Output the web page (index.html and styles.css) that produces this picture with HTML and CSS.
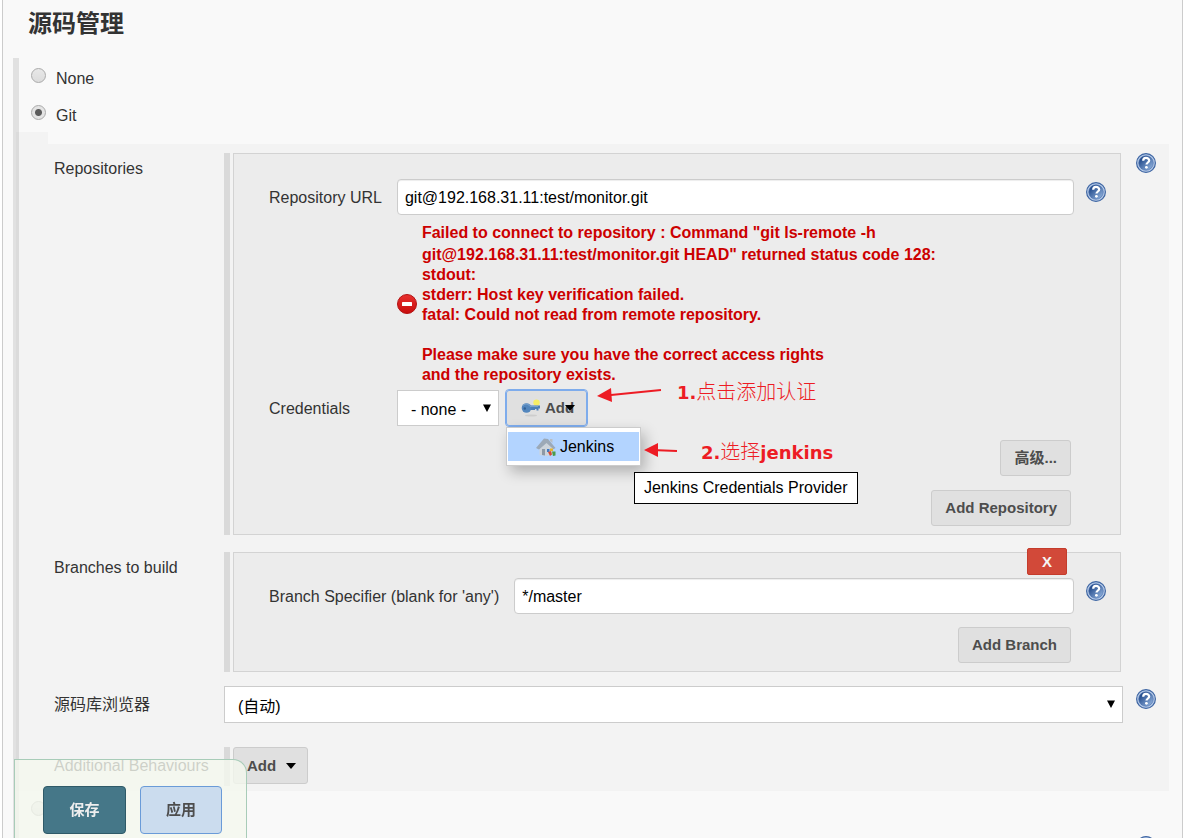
FILE: index.html
```html
<!DOCTYPE html>
<html lang="zh-CN">
<head>
<meta charset="utf-8">
<title>源码管理</title>
<link rel="stylesheet" href="styles.css">
</head>
<body>
<svg class="defs" aria-hidden="true">
  <defs>
    <linearGradient id="helpFill" x1="0" y1="0" x2="1" y2="1">
      <stop offset="0.15" stop-color="#1f4788"/><stop offset="0.9" stop-color="#8fb0dc"/>
    </linearGradient>
    <linearGradient id="errorFill" x1="0" y1="0" x2="0" y2="1">
      <stop offset="0" stop-color="#e8302e"/><stop offset="1" stop-color="#c80d0d"/>
    </linearGradient>
    <symbol id="help" viewBox="0 0 20 20">
      <circle cx="10" cy="10" r="9.4" fill="#b9cde9" stroke="#3f66a3" stroke-width="1.2"/>
      <circle cx="10" cy="10" r="7.3" fill="url(#helpFill)" stroke="#4a6fac" stroke-width=".6"/>
      <path d="M7.200 7.700C7.200 5.700 8.300 4.900 10 4.900s3.200.9 3.200 2.600c0 1.900-2.700 2.100-2.700 4.100" fill="none" stroke="#fff" stroke-width="2.200"/>
      <circle cx="10.400" cy="14.300" r="1.400" fill="#fff"/>
    </symbol>
    <symbol id="caret" viewBox="0 0 10 10"><path d="M1 1.5h8L5 9z" fill="#000"/></symbol>
  </defs>
</svg>
<main class="page">
  <h1 class="title">源码管理</h1>
  <section class="section">
    <label class="choice"><input type="radio" name="scm"><span>None</span></label>
    <label class="choice"><input type="radio" name="scm" checked><span>Git</span></label>
    <div class="git">
      <div class="git-tab"></div>
      <div class="git-body">
        <div class="row repositories">
          <div class="row-label">Repositories</div>
          <div class="chunk">
            <div class="card">
              <div class="fields">
                <label for="url">Repository URL</label>
                <input class="text" id="url" type="text" value="git@192.168.31.11:test/monitor.git">
                <button class="help" type="button" aria-label="Help"><svg><use href="#help"/></svg></button>
                <div class="error">
                  <svg class="error-icon" viewBox="0 0 20 20"><circle cx="10" cy="10" r="9.5" fill="url(#errorFill)" stroke="#b31313"/><rect x="5" y="8" width="10" height="4" rx=".6" fill="#fff"/></svg>
                  <div class="error-text">
                    <p class="error-head">Failed to connect to repository : Command "git ls-remote -h</p>
                    <p>git@192.168.31.11:test/monitor.git HEAD" returned status code 128:<br>stdout:<br>stderr: Host key verification failed.<br>fatal: Could not read from remote repository.<br><br>Please make sure you have the correct access rights<br>and the repository exists.</p>
                  </div>
                </div>
                <label class="cred-label" for="cred">Credentials</label>
                <div class="credentials">
                  <div class="select cred-select">
                    <select id="cred"><option>- none -</option></select>
                    <svg class="arrow"><use href="#caret"/></svg>
                  </div>
                  <div class="add-cred">
                    <button class="btn key-btn" type="button">
                      <svg class="key" viewBox="0 0 20 18">
                        <ellipse cx="10" cy="16.500" rx="6" ry="1" fill="#cdcdcd"/>
                        <circle cx="15.500" cy="3.600" r="3.200" fill="#f7ee65"/>
                        <path d="M8 6.500h11v3h-1.500v2h-2v-1.500h-1.500v1H8z" fill="#4d7fb5"/>
                        <ellipse cx="5.500" cy="9" rx="4.800" ry="4.800" fill="#5386bd"/>
                        <path d="M2 6.500c2-2 5-2 7 .8h8" fill="none" stroke="#82a9d2"/>
                        <circle cx="3.800" cy="9.500" r="1.200" fill="#315f93"/>
                      </svg>
                      <span>Add</span>
                      <svg class="key-arrow" viewBox="0 0 10 6"><path d="M0 0h10L5 6z"/></svg>
                    </button>
                    <div class="menu" role="menu">
                      <button class="menu-item" type="button" role="menuitem">
                        <svg class="house" viewBox="0 0 20 20">
                          <path d="M3.500 10v8l7 1 6.500-1.500V9L10 3z" fill="#cdd4db"/>
                          <path d="M0 11 8 1.500l4 .5 7.500 9-2 1.200L10.500 6 3 12.500z" fill="#9ca9b7"/>
                          <path d="M14 2h2.500v4L14 4z" fill="#b9bfc5"/>
                          <path d="M6 12h3v6.500l-3-.5z" fill="#8d99a6"/>
                          <path d="M11 12h2.500v3H11z" fill="#3f79c2"/><path d="M14 11.500h3v2.500h-3z" fill="#e2b32f"/>
                          <path d="M12 15l3-1 1 3.500-2 1.500z" fill="#d54a35"/><path d="M16 14.500h3.500v4L17 19z" fill="#4b9b4a"/>
                        </svg>
                        <span>Jenkins</span>
                      </button>
                    </div>
                    <div class="tooltip" role="tooltip">Jenkins Credentials Provider</div>
                    <svg class="pointers" viewBox="0 0 180 80">
                      <path d="M155 0 105 5M171 61l-25-1" stroke="#ed1c24" stroke-width="2" fill="none"/>
                      <path d="M91 6 105-2 106 12zM138 60l14-7v14z" fill="#ed1c24"/>
                    </svg>
                    <div class="note note-one">1.<span>点击添加认证</span></div>
                    <div class="note note-two">2.<span>选择</span>jenkins</div>
                  </div>
                </div>
              </div>
              <div class="actions repo-actions">
                <button class="btn" type="button">高级...</button>
                <button class="btn" type="button">Add Repository</button>
              </div>
            </div>
          </div>
          <button class="help row-help" type="button" aria-label="Help"><svg><use href="#help"/></svg></button>
        </div>
        <div class="row branches">
          <div class="row-label">Branches to build</div>
          <div class="chunk">
            <div class="card">
              <button class="delete" type="button">X</button>
              <div class="fields">
                <label for="branch">Branch Specifier (blank for 'any')</label>
                <input class="text" id="branch" type="text" value="*/master">
                <button class="help" type="button" aria-label="Help"><svg><use href="#help"/></svg></button>
              </div>
              <div class="actions">
                <button class="btn" type="button">Add Branch</button>
              </div>
            </div>
          </div>
        </div>
        <div class="row browser">
          <label class="row-label" for="browser">源码库浏览器</label>
          <div class="select">
            <select id="browser"><option>(自动)</option></select>
            <svg class="arrow"><use href="#caret"/></svg>
          </div>
          <button class="help browser-help" type="button" aria-label="Help"><svg><use href="#help"/></svg></button>
        </div>
        <div class="row behaviours">
          <div class="row-label">Additional Behaviours</div>
          <div class="chunk">
            <button class="btn add-behaviour" type="button">Add<svg viewBox="0 0 10 6"><path d="M0 0h10L5 6z"/></svg></button>
          </div>
        </div>
      </div>
    </div>
    <div class="next">
      <label class="choice"><input type="radio" name="scm" aria-label="Subversion"></label>
      <button class="help next-help" type="button" aria-label="Help"><svg><use href="#help"/></svg></button>
    </div>
  </section>
</main>
<div class="save-bar">
  <button class="save" type="submit">保存</button>
  <button class="apply" type="button">应用</button>
</div>
</body>
</html>
```

FILE: styles.css
```css
* { box-sizing: border-box; }

body {
  margin: 0;
  height: 100vh;
  overflow: hidden;
  background: #fff;
  color: #333;
  font: 16px/20px "Liberation Sans", "Noto Sans CJK SC", sans-serif;
}

button, input, select { font: inherit; color: inherit; margin: 0; }
p { margin: 0; }
.defs { position: absolute; width: 0; height: 0; }

.page {
  margin: 0 3px 0 2px;
  min-height: 100vh;
  border: solid #ccc;
  border-width: 0 1px;
  background: #f9f9f9;
}

.title {
  margin: 0;
  padding: 8px 25px 18px;
  font-size: 24px;
  line-height: 32px;
}

.section {
  margin: 0 13px 0 10px;
  border-left: 6px solid #e1e1e1;
}

.choice {
  display: flex;
  align-items: flex-start;
  gap: 10px;
  height: 37px;
  padding: 10px 12px 0;
}

.choice span { padding-top: 1px; }

.choice input {
  appearance: none;
  width: 15px;
  height: 15px;
  border: 1px solid #aaa;
  border-radius: 50%;
  background: linear-gradient(#e8e8e8, #dcdcdc);
}

.choice input:checked { background: radial-gradient(circle, #5c5c5c 3px, #e4e4e4 4px); }

.git { margin-left: -3px; }
.git-tab { width: 32px; height: 12px; background: rgba(0, 0, 0, .025); }

.git-body {
  padding: 9px 13px 5px 38px;
  background: rgba(0, 0, 0, .025);
}

.row {
  display: grid;
  grid-template-columns: 170px 1fr 20px;
  align-items: start;
}

.repositories { margin-bottom: 17px; }
.branches { margin-bottom: 14px; }
.browser { margin-bottom: 24px; }
.row-label { padding-top: 6px; }
.browser .row-label { padding-top: 9px; }
.behaviours .row-label { padding-top: 9px; }

.chunk {
  margin-right: 15px;
  padding-left: 3px;
  border-left: 6px solid #d9d9d9;
}

.card {
  position: relative;
  padding: 25px 14px 8px 35px;
  border: 1px solid #d3d3d3;
  background: #ececec;
}

.fields {
  display: grid;
  grid-template-columns: max-content 1fr 20px;
  align-items: start;
  column-gap: 12px;
}

.fields > label { padding: 9px 3px 0 0; }
.cred-label { grid-column: 1; }

.text {
  width: 100%;
  height: 36px;
  padding: 2px 7px 0;
  border: 1px solid #ccc;
  border-radius: 4px;
  background: #fff;
  box-shadow: inset 0 1px 1px rgba(0, 0, 0, .075);
  color: #000;
}

.help {
  width: 20px;
  height: 20px;
  margin-top: 3px;
  padding: 0;
  border: 0;
  background: none;
}

.help svg { display: block; width: 20px; height: 20px; }
.row-help { margin-top: 0; }

.error {
  grid-column: 2;
  display: flex;
  align-items: center;
  gap: 5px;
  padding: 8px 0 5px;
  color: #c00;
  font-weight: bold;
}

.error-icon { width: 20px; height: 20px; flex: none; }
.error-head { margin-bottom: 2px; }

.credentials { grid-column: 2; display: flex; gap: 7px; }

.select { position: relative; margin-right: 13px; }

.select select {
  display: block;
  width: 100%;
  height: 37px;
  padding: 5px 13px 0;
  appearance: none;
  border: 1px solid #ccc;
  border-radius: 0;
  background: #fff;
  color: #000;
}

.cred-select { width: 102px; margin: 0; }
.cred-select select { height: 36px; padding-top: 3px; }

.arrow {
  position: absolute;
  top: 13px;
  right: 7px;
  width: 10px;
  height: 10px;
  pointer-events: none;
}

.btn {
  height: 36px;
  padding: 0 13px;
  border: 1px solid #ccc;
  border-radius: 3px;
  background: #e0e0e0;
  color: #4d4d4d;
  font-size: 15px;
  font-weight: bold;
}

.add-cred { position: relative; }

.key-btn {
  display: flex;
  align-items: center;
  gap: 4px;
  width: 81px;
  padding: 0 14px;
  outline: 1px solid #7eacec;
  border-color: #7eacec;
}

.key { width: 20px; height: 18px; flex: none; }
.key-arrow { position: absolute; top: 15px; right: 12px; width: 10px; height: 6px; fill: #000; }

.menu {
  position: absolute;
  top: 37px;
  left: 0;
  width: 135px;
  padding: 4px 1px;
  border: 1px solid #ccc;
  background: #fff;
  box-shadow: 4px 6px 14px rgba(0, 0, 0, .25);
}

.menu-item {
  display: flex;
  align-items: center;
  gap: 4px;
  width: 100%;
  height: 29px;
  padding: 0 28px;
  border: 0;
  background: #b3d4ff;
  color: #000;
}

.house { width: 20px; height: 20px; flex: none; }

.tooltip {
  position: absolute;
  top: 82px;
  left: 128px;
  padding: 5px 9px;
  border: 1px solid #000;
  background: #fff;
  color: #000;
  white-space: nowrap;
}

.pointers {
  position: absolute;
  top: 0;
  left: 0;
  width: 180px;
  height: 80px;
  overflow: visible;
  pointer-events: none;
}

.note {
  position: absolute;
  color: #ed1c24;
  font: bold 18px/24px "DejaVu Sans", sans-serif;
  white-space: nowrap;
}

.note span { font-family: "Noto Sans CJK SC", sans-serif; font-size: 20px; font-weight: 300; }
.note-one { top: -11px; left: 171px; }
.note-two { top: 49px; left: 195px; }

.actions {
  display: flex;
  flex-direction: column;
  align-items: flex-end;
  gap: 14px;
  padding: 13px 35px 0 0;
}

.repo-actions { padding-top: 14px; }

.delete {
  position: absolute;
  top: -5px;
  right: 53px;
  width: 40px;
  height: 27px;
  padding: 0;
  border: 1px solid #c43c2c;
  border-radius: 2px;
  background: #d24939;
  color: #f5f5f5;
  font-size: 15px;
  font-weight: bold;
}

.add-behaviour { display: flex; align-items: center; gap: 10px; height: 37px; padding: 0 11px 0 13px; }
.add-behaviour svg { width: 10px; height: 6px; fill: #000; }
.behaviours .chunk { height: 39px; }

.next { display: flex; justify-content: space-between; align-items: flex-start; }
.next-help { margin: 45px 13px 0 0; }

.save-bar {
  position: fixed;
  bottom: 0;
  left: 14px;
  display: flex;
  gap: 14px;
  padding: 26px 24px 4px 28px;
  border: 1px solid #a8ccb8;
  border-bottom: 0;
  border-radius: 0 14px 0 0;
  background: rgba(244, 248, 238, .8);
}

.save-bar button {
  width: 82px;
  height: 48px;
  border: 1px solid #6a9bd8;
  border-radius: 4px;
  background: #cbdcee;
  color: #4d4d4d;
  font-size: 15px;
  font-weight: bold;
}

.save-bar .save { width: 83px; border-color: #2f5a68; background: #457788; color: #eee; }
```
